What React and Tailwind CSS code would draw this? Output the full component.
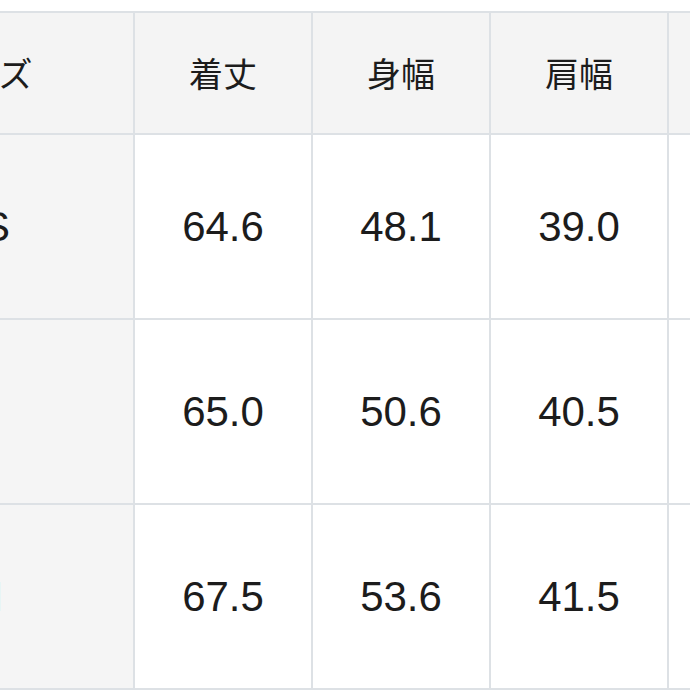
export default function App() {
  const headers = ["サイズ", "着丈", "身幅", "肩幅", "袖丈"];
  const rows = [
    ["XS", "64.6", "48.1", "39.0", "59.5"],
    ["S", "65.0", "50.6", "40.5", "60.5"],
    ["M", "67.5", "53.6", "41.5", "61.5"],
  ];
  return (
    <div className="w-[690px] h-[690px] overflow-hidden bg-white">
      <div
        className="mt-[11px] ml-[-171px] w-max grid grid-cols-[302px_176px_176px_176px_176px] grid-rows-[120px_183px_183px_183px] gap-[2px] p-[2px] bg-[#dde1e5] text-[#1c1c1c]"
        style={{ fontFamily: '"Liberation Sans", Arial, "Noto Sans CJK JP", sans-serif' }}
      >
        {headers.map((h) => (
          <div
            key={h}
            className="bg-[#f4f4f4] flex items-center justify-center text-[34px] leading-none"
            style={{ fontFamily: '"Noto Sans CJK JP", sans-serif' }}
          >
            {h}
          </div>
        ))}
        {rows.map((r, ri) =>
          r.map((c, i) => (
            <div
              key={r[0] + i}
              className={
                (i === 0 ? "bg-[#f5f5f5]" : "bg-white") +
                (i === 0 && ri === 2 ? " pl-[7px]" : "") +
                " flex items-center justify-center text-[42px] leading-none"
              }
            >
              {c}
            </div>
          ))
        )}
      </div>
    </div>
  );
}
